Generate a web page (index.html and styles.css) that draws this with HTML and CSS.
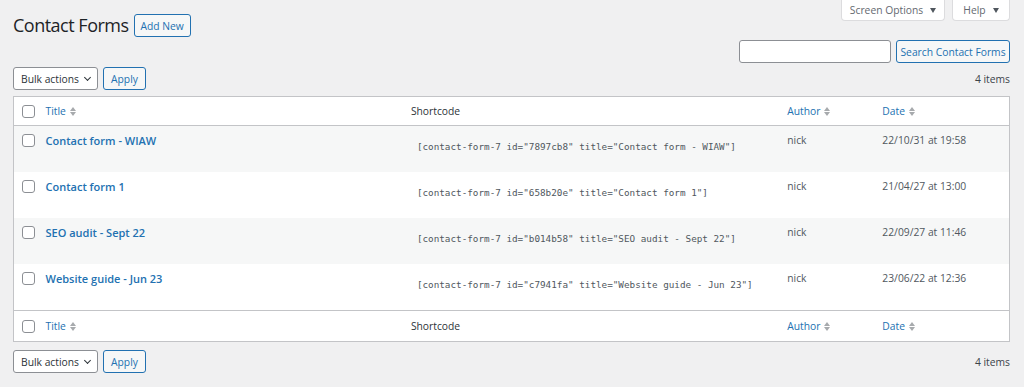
FILE: index.html
```html
<!DOCTYPE html>
<html lang="en">
<head>
    <meta charset="UTF-8">
    <meta name="viewport" content="width=device-width, initial-scale=1.0">
    <title>Contact Forms</title>
    <link rel="stylesheet" href="styles.css">
</head>
<body>
    <div class="wrap">
        <div class="head-row">
            <h1>Contact Forms</h1>
            <a class="btn btn-outline add-new" href="#">Add New</a>
            <div class="meta-links">
                <span class="meta-tab screen-opt">Screen Options <i class="caret"></i></span>
                <span class="meta-tab help">Help <i class="caret"></i></span>
            </div>
        </div>

        <div class="search-row">
            <input type="search" class="search-input">
            <button class="btn btn-outline">Search Contact Forms</button>
        </div>

        <div class="tablenav">
            <div class="bulk">
                <span class="select">Bulk actions <i class="chev"></i></span>
                <button class="btn btn-outline">Apply</button>
            </div>
            <span class="count">4 items</span>
        </div>

        <table class="list">
            <colgroup>
                <col class="c-cb"><col class="c-title"><col class="c-code"><col class="c-author"><col class="c-date">
            </colgroup>
            <thead>
                <tr>
                    <th><span class="cb"></span></th>
                    <th><a class="sort" href="#">Title <i class="arrows"></i></a></th>
                    <th class="plain">Shortcode</th>
                    <th><a class="sort" href="#">Author <i class="arrows"></i></a></th>
                    <th><a class="sort" href="#">Date <i class="arrows"></i></a></th>
                </tr>
            </thead>
            <tbody>
                <tr>
                    <td><span class="cb"></span></td>
                    <td><a class="row-title" href="#">Contact form - WIAW</a></td>
                    <td><code>[contact-form-7 id="7897cb8" title="Contact form - WIAW"]</code></td>
                    <td>nick</td>
                    <td>22/10/31 at 19:58</td>
                </tr>
                <tr>
                    <td><span class="cb"></span></td>
                    <td><a class="row-title" href="#">Contact form 1</a></td>
                    <td><code>[contact-form-7 id="658b20e" title="Contact form 1"]</code></td>
                    <td>nick</td>
                    <td>21/04/27 at 13:00</td>
                </tr>
                <tr>
                    <td><span class="cb"></span></td>
                    <td><a class="row-title" href="#">SEO audit - Sept 22</a></td>
                    <td><code>[contact-form-7 id="b014b58" title="SEO audit - Sept 22"]</code></td>
                    <td>nick</td>
                    <td>22/09/27 at 11:46</td>
                </tr>
                <tr>
                    <td><span class="cb"></span></td>
                    <td><a class="row-title" href="#">Website guide - Jun 23</a></td>
                    <td><code>[contact-form-7 id="c7941fa" title="Website guide - Jun 23"]</code></td>
                    <td>nick</td>
                    <td>23/06/22 at 12:36</td>
                </tr>
            </tbody>
            <tfoot>
                <tr>
                    <th><span class="cb"></span></th>
                    <th><a class="sort" href="#">Title <i class="arrows"></i></a></th>
                    <th class="plain">Shortcode</th>
                    <th><a class="sort" href="#">Author <i class="arrows"></i></a></th>
                    <th><a class="sort" href="#">Date <i class="arrows"></i></a></th>
                </tr>
            </tfoot>
        </table>

        <div class="tablenav bottom">
            <div class="bulk">
                <span class="select">Bulk actions <i class="chev"></i></span>
                <button class="btn btn-outline">Apply</button>
            </div>
            <span class="count">4 items</span>
        </div>
    </div>
</body>
</html>
```

FILE: styles.css
```css
body {
    margin: 0;
    background-color: #f0f0f1;
    color: #3c434a;
    font-family: 'Open Sans', 'Noto Sans', sans-serif;
    font-size: 10.3px;
}
.wrap {
    padding: 0 14px 0 13px;
}
a {
    text-decoration: none;
}

/* heading */
.head-row {
    display: flex;
    align-items: flex-start;
    height: 40px;
}
h1 {
    margin: 12px 0 0 0;
    font-size: 18px;
    letter-spacing: -0.5px;
    font-weight: 400;
    color: #1d2327;
    line-height: 26px;
}
.add-new {
    width: 57px;
    margin: 14px 0 0 5px;
}
.meta-links {
    margin-left: auto;
    display: flex;
    gap: 7px;
}
.meta-tab {
    display: flex;
    align-items: center;
    justify-content: center;
    gap: 7px;
    box-sizing: border-box;
    height: 21px;
    background-color: #fff;
    border: 1px solid #dcdcde;
    border-top: 0;
    border-radius: 0 0 4px 4px;
    color: #646970;
    white-space: nowrap;
}
.screen-opt {
    width: 104px;
}
.help {
    width: 58px;
}
.caret {
    width: 0;
    height: 0;
    border-left: 3px solid transparent;
    border-right: 3px solid transparent;
    border-top: 5px solid #50575e;
}

/* buttons */
.btn {
    display: inline-flex;
    align-items: center;
    justify-content: center;
    box-sizing: border-box;
    height: 23px;
    padding: 0 6px;
    font-family: inherit;
    font-size: 10.3px;
    border-radius: 3px;
    white-space: nowrap;
    cursor: pointer;
}
.btn-outline {
    background-color: #f6f7f7;
    border: 1px solid #2271b1;
    color: #2271b1;
}

/* search */
.search-row {
    display: flex;
    justify-content: flex-end;
    gap: 5px;
}
.search-input {
    box-sizing: border-box;
    width: 152px;
    height: 23px;
    margin: 0;
    border: 1px solid #8c8f94;
    border-radius: 3px;
    background-color: #fff;
}
.search-row .btn {
    width: 114px;
}

/* tablenav */
.tablenav {
    display: flex;
    justify-content: space-between;
    align-items: center;
    margin-top: 4px;
    height: 23px;
}
.tablenav.bottom {
    margin-top: 8px;
}
.bulk {
    display: flex;
    gap: 5px;
}
.select {
    display: inline-flex;
    align-items: center;
    justify-content: space-between;
    box-sizing: border-box;
    width: 85px;
    height: 23px;
    padding: 0 7px 0 7px;
    background-color: #fff;
    border: 1px solid #8c8f94;
    border-radius: 3px;
    color: #2c3338;
    white-space: nowrap;
}
.chev {
    width: 4px;
    height: 4px;
    border-right: 1.5px solid #2c3338;
    border-bottom: 1.5px solid #2c3338;
    transform: rotate(45deg);
    margin-top: -3px;
}
.bulk .btn {
    width: 43px;
}
.count {
    color: #3c434a;
}

/* table */
.list {
    width: 100%;
    margin-top: 6px;
    border-collapse: collapse;
    table-layout: fixed;
    background-color: #fff;
    border: 1px solid #c3c4c7;
}
.c-cb { width: 24px; }
.c-title { width: 365px; }
.c-code { width: 376px; }
.c-author { width: 95px; }
.c-date { width: 135px; }

.list th {
    height: 28px;
    padding: 0 8px;
    text-align: left;
    font-weight: 400;
    color: #2c3338;
}
.list thead th {
    border-bottom: 1px solid #c3c4c7;
}
.list tfoot th {
    height: 30px;
    border-top: 1px solid #c3c4c7;
}
.list td {
    height: 39px;
    padding: 7px 8px 0;
    vertical-align: top;
    line-height: 15px;
    color: #50575e;
}
.list tbody tr:nth-child(odd) {
    background-color: #f6f7f7;
}
.cb {
    display: inline-block;
    box-sizing: border-box;
    width: 13px;
    height: 13px;
    border: 1px solid #8c8f94;
    border-radius: 3px;
    background-color: #fff;
    vertical-align: middle;
}
.list td .cb {
    vertical-align: top;
    margin-top: 1px;
}
.sort {
    display: inline-flex;
    align-items: center;
    gap: 4px;
    color: #2271b1;
}
.arrows {
    display: inline-flex;
    flex-direction: column;
    gap: 1px;
}
.arrows::before,
.arrows::after {
    content: "";
    width: 0;
    height: 0;
    border-left: 3.5px solid transparent;
    border-right: 3.5px solid transparent;
}
.arrows::before {
    border-bottom: 4px solid #a7aaad;
}
.arrows::after {
    border-top: 4px solid #a7aaad;
}
.row-title {
    color: #2271b1;
    font-weight: 600;
    font-size: 11px;
}
code {
    display: inline-block;
    margin-top: 6px;
    padding-left: 6px;
    font-family: 'DejaVu Sans Mono', monospace;
    font-size: 9.3px;
    color: #50575e;
}
```
